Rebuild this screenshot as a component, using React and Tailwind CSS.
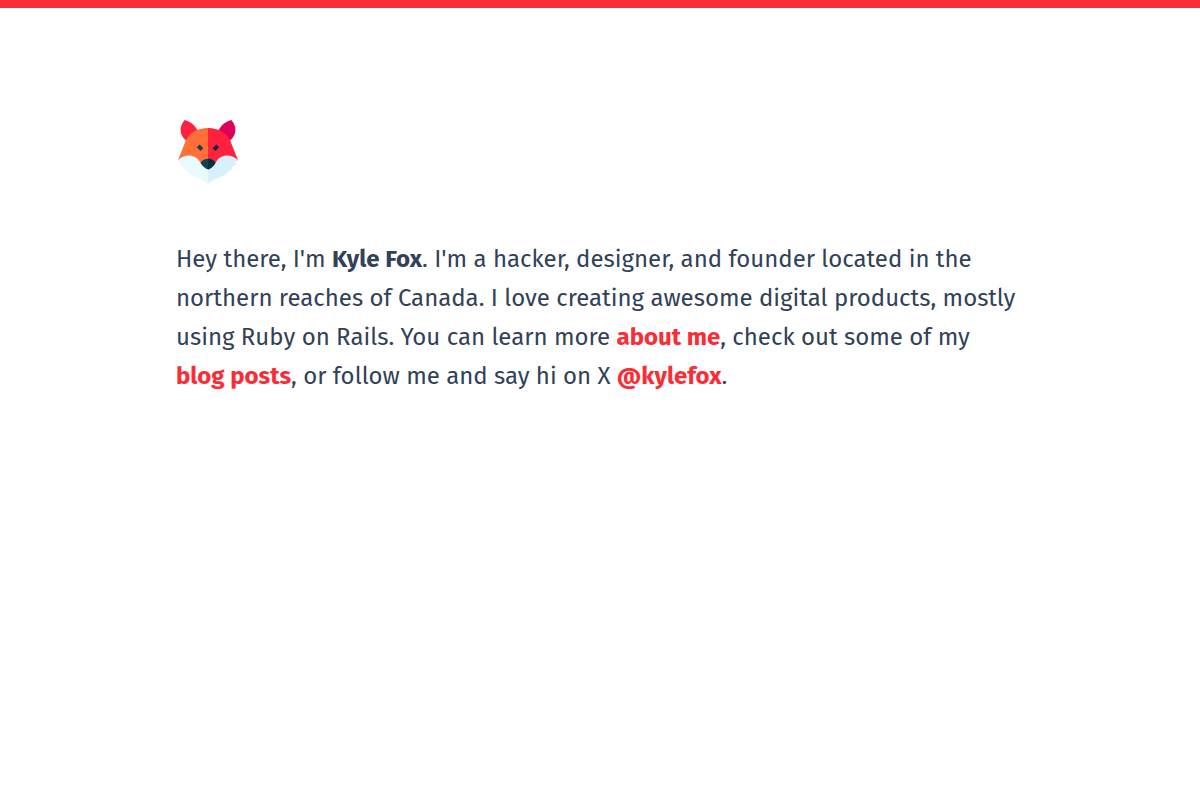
function FoxLogo() {
  return (
    <svg viewBox="0 0 64 64" className="w-16 h-16" aria-hidden="true">
      {/* Ears */}
      <path d="M8.6 0C4.4 5 1.6 13 10 20.8L16 22L21.8 11C19 5.5 15 1.8 8.6 0Z" fill="#ff223e" />
      <path d="M55.4 0C59.6 5 62.4 13 54 20.8L48 22L42.2 11C45 5.5 49 1.8 55.4 0Z" fill="#df0059" />
      {/* Head */}
      <path d="M32 8C21.5 8 13 13 9.4 21.6C7 28 4.6 34 2 40L14 47H32Z" fill="#ff6f37" />
      <path d="M32 8C42.5 8 51 13 54.6 21.6C57 28 59.4 34 62 40L50 47H32Z" fill="#ff223e" />
      {/* Muzzle */}
      <path d="M2 40C8 34 19.5 33 24.6 43L32 49V64C27 60.5 24 58.2 19.5 57L14.5 54.5L13 52.5L7.5 49L8 47L3.5 44.5L5 42.5Z" fill="#e9fafe" />
      <path d="M62 40C56 34 44.5 33 39.4 43L32 49V64C37 60.5 40 58.2 44.5 57L49.5 54.5L51 52.5L56.5 49L56 47L60.5 44.5L59 42.5Z" fill="#d8f0fa" />
      {/* Nose */}
      <path d="M24.6 43C28 37.4 36 37.4 39.4 43C37.6 46.2 35 48.6 32 49.4C29 48.6 26.4 46.2 24.6 43Z" fill="#15414f" />
      <path d="M32 38.8C35 38.8 37.8 40.2 39.4 43C37.6 46.2 35 48.6 32 49.4Z" fill="#06303e" />
      {/* Eyes */}
      <path d="M20.8 27.2L23.6 24.4L27.4 28.2L24.6 31Z" fill="#15414f" />
      <path d="M43.2 27.2L40.4 24.4L36.6 28.2L39.4 31Z" fill="#06303e" />
    </svg>
  );
}

function TextLink({ href, children }) {
  return (
    <a href={href} className="font-bold text-red-500 hover:text-red-700">
      {children}
    </a>
  );
}

function App() {
  return (
    <div className="border-t-8 border-red-500 font-['Fira_Sans','Noto_Sans',sans-serif] text-slate-700 antialiased">
      <main className="max-w-4xl mx-auto px-6 py-28">
        <FoxLogo />
        <p className="mt-14 text-2xl leading-relaxed">
          Hey there, I'm <strong className="font-bold">Kyle Fox</strong>. I'm a hacker, designer, and
          founder located in the northern reaches of Canada. I love creating awesome digital products,
          mostly using Ruby on Rails. You can learn more <TextLink href="/about">about me</TextLink>,
          check out some of my <TextLink href="/blog">blog posts</TextLink>, or follow me and say hi
          on X <TextLink href="https://x.com/kylefox">@kylefox</TextLink>.
        </p>
      </main>
    </div>
  );
}

export default App;
